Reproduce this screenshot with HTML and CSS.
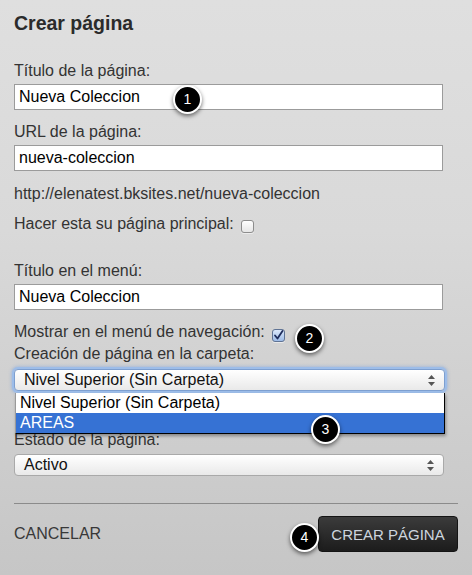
FILE: index.html
```html
<!DOCTYPE html>
<html lang="es">
<head>
<meta charset="utf-8">
<title>Crear página</title>
<link rel="stylesheet" href="styles.css">
</head>
<body>
<div class="page">
  <h1 class="title">Crear página</h1>

  <div class="label first">Título de la página:</div>
  <div class="input">Nueva Coleccion</div>

  <div class="label gap13">URL de la página:</div>
  <div class="input">nueva-coleccion</div>

  <div class="url">http://elenatest.bksites.net/nueva-coleccion</div>

  <div class="check-row hacer">
    <span>Hacer esta su página principal:</span>
    <span class="cb"></span>
  </div>

  <div class="label menu-title">Título en el menú:</div>
  <div class="input">Nueva Coleccion</div>

  <div class="row22 mostrar">
    <span>Mostrar en el menú de navegación:</span>
    <span class="cb checked">
      <svg width="13" height="13" viewBox="0 0 13 13">
        <path d="M3 6.5 L5.5 9.5 L10.5 2" fill="none" stroke="#1d2c5c" stroke-width="1.8" stroke-linecap="round" stroke-linejoin="round"/>
      </svg>
    </span>
  </div>
  <div class="row22">Creación de página en la carpeta:</div>
  <div class="select focus">
    <span>Nivel Superior (Sin Carpeta)</span>
    <svg class="arrows" width="7" height="11" viewBox="0 0 7 11"><path d="M3.5 0 L7 4 L0 4 Z M0 7 L7 7 L3.5 11 Z" fill="#555"/></svg>
  </div>

  <div class="label estado">Estado de la página:</div>
  <div class="select">
    <span>Activo</span>
    <svg class="arrows" width="7" height="11" viewBox="0 0 7 11"><path d="M3.5 0 L7 4 L0 4 Z M0 7 L7 7 L3.5 11 Z" fill="#555"/></svg>
  </div>

  <div class="divider"></div>

  <div class="footer">
    <span class="cancel">CANCELAR</span>
    <span class="btn">CREAR PÁGINA</span>
  </div>

  <div class="dropdown">
    <div class="opt">Nivel Superior (Sin Carpeta)</div>
    <div class="opt sel">AREAS</div>
  </div>

  <span class="badge b1">1</span>
  <span class="badge b2">2</span>
  <span class="badge b3">3</span>
  <span class="badge b4">4</span>
</div>
</body>
</html>
```

FILE: styles.css
```css
html, body {
  margin: 0;
  padding: 0;
}
body {
  font-family: "Liberation Sans", Arial, Helvetica, sans-serif;
  font-size: 16px;
  color: #333;
  background: #d2d2d2;
}
.page {
  position: relative;
  box-sizing: border-box;
  width: 472px;
  height: 575px;
  padding: 12px 14px 0 14px;
  background: linear-gradient(#dfdfdf, #d9d9d9 40%, #c6c6c6);
  overflow: hidden;
}
.title {
  margin: 0;
  font-size: 19.5px;
  line-height: 22px;
  font-weight: bold;
  color: #2b2b2b;
}
.label {
  line-height: 18px;
  margin-bottom: 4px;
}
.first { margin-top: 28px; }
.gap13 { margin-top: 13px; }
.menu-title { margin-top: 29px; }
.estado { margin-top: 40px; margin-bottom: 5px; }
.input {
  box-sizing: border-box;
  width: 429px;
  height: 26px;
  border: 1px solid #9b9b9b;
  background: #fff;
  color: #000;
  padding: 0 4px;
  line-height: 24px;
}
.url {
  margin-top: 14px;
  line-height: 18px;
}
.check-row {
  display: flex;
  align-items: center;
  gap: 7px;
  line-height: 18px;
}
.hacer {
  margin-top: 12px;
}
.hacer .cb { margin-top: 5px; }
.cb {
  display: inline-block;
  box-sizing: border-box;
  width: 13px;
  height: 13px;
  border: 1px solid #8d8d8d;
  border-radius: 3px;
  background: linear-gradient(#ffffff, #e6e6e6);
  box-shadow: 0 1px 0 rgba(255,255,255,0.5);
}
.cb.checked {
  border-color: #5f7394;
  background: linear-gradient(#dbe8fb, #9dbbe6);
  position: relative;
}
.cb.checked svg {
  position: absolute;
  left: -1px;
  top: -1px;
}
.row22 {
  line-height: 22px;
}
.mostrar {
  margin-top: 11px;
  display: flex;
  align-items: center;
  gap: 7px;
}
.mostrar .cb { margin-top: 6px; }
.select {
  box-sizing: border-box;
  width: 431px;
  height: 22px;
  margin-top: 4px;
  border: 1px solid #a9a9a9;
  border-radius: 4px;
  background: linear-gradient(#ffffff, #f4f4f4 50%, #e9e9e9);
  color: #111;
  display: flex;
  align-items: center;
  justify-content: space-between;
  padding: 0 9px 0 9px;
  line-height: 20px;
}
.select.focus {
  border-color: #7d9fd0;
  box-shadow: 0 0 0 2px #9dbde9, 0 0 3px 3px rgba(120,160,220,0.45);
}
.estado + .select {
  width: 430px;
  margin-top: 0;
}
.divider {
  margin-top: 27px;
  height: 1px;
  background: #8b8b8b;
  width: 444px;
}
.footer {
  margin-top: 12px;
  width: 444px;
  display: flex;
  justify-content: space-between;
  align-items: center;
}
.cancel {
  color: #383838;
}
.btn {
  box-sizing: border-box;
  width: 140px;
  height: 36px;
  border: 1px solid #141414;
  border-radius: 4px;
  background: linear-gradient(#3b3b3b, #1c1c1c);
  color: #cdd5de;
  font-size: 15px;
  display: flex;
  align-items: center;
  justify-content: center;
}
.dropdown {
  position: absolute;
  left: 15px;
  top: 393px;
  width: 430px;
  box-sizing: border-box;
  border-left: 1px solid #9a9a9a;
  border-right: 1px solid #000;
  border-bottom: 1px solid #000;
  background: #fff;
  box-shadow: 1px 2px 3px rgba(0,0,0,0.35);
}
.opt {
  height: 20px;
  line-height: 20px;
  padding-left: 4px;
  color: #000;
}
.opt.sel {
  background: #3672d4;
  color: #fff;
}
.badge {
  position: absolute;
  box-sizing: border-box;
  width: 29px;
  height: 29px;
  border-radius: 50%;
  background: #000;
  border: 2px solid #fff;
  box-shadow: 0 2px 4px rgba(0,0,0,0.55);
  color: #fff;
  font-size: 14px;
  line-height: 25px;
  text-align: center;
}
.b1 { left: 173px; top: 85px; }
.b2 { left: 295px; top: 324px; }
.b3 { left: 311px; top: 415px; }
.b4 { left: 290px; top: 523px; }
```
